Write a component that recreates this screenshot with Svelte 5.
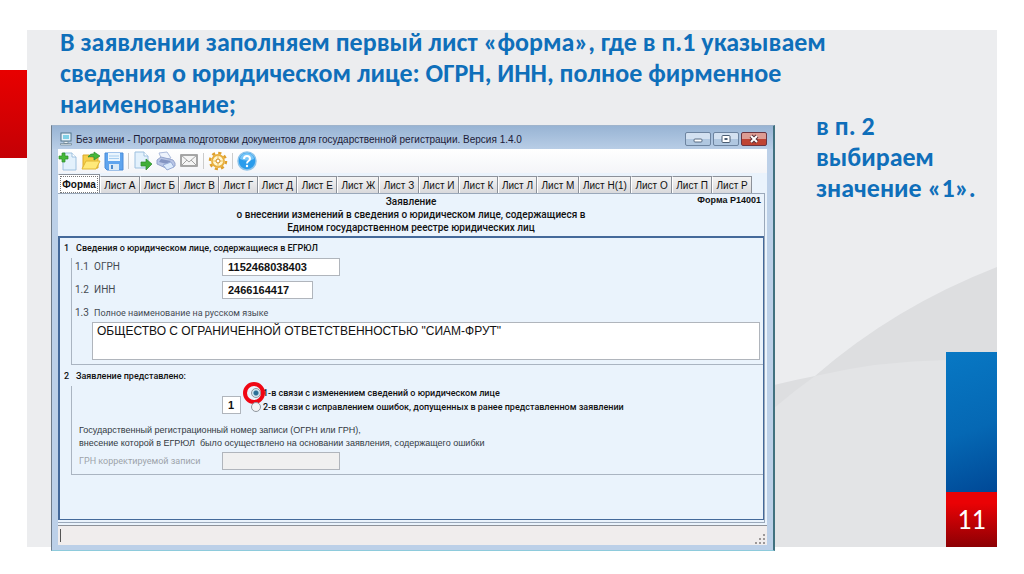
<script lang="ts">
	interface Sheet {
		id: string;
		label: string;
	}

	const sheets: Sheet[] = [
		'Форма',
		'Лист А',
		'Лист Б',
		'Лист В',
		'Лист Г',
		'Лист Д',
		'Лист Е',
		'Лист Ж',
		'Лист З',
		'Лист И',
		'Лист К',
		'Лист Л',
		'Лист М',
		'Лист Н(1)',
		'Лист О',
		'Лист П',
		'Лист Р'
	].map((label, i) => ({ id: `sheet-${i}`, label }));

	let active = $state('sheet-0');
	let reason = $state('1');
	let ogrn = $state('1152468038403');
	let inn = $state('2466164417');
	let fullName = $state('ОБЩЕСТВО С ОГРАНИЧЕННОЙ ОТВЕТСТВЕННОСТЬЮ "СИАМ-ФРУТ"');
</script>

<div class="slide">
	<div class="accent"></div>
	<div class="panel">
		<svg class="waves" viewBox="0 0 223 280" aria-hidden="true">
			<path d="M0 118Q20 113 41 109Q120 40 223 0V280H0Z" fill="#dddee0" />
			<path d="M0 141Q20 124 41 109Q105 94 172 93L223 91V280H0Z" fill="#e3e4e6" />
		</svg>

		<main class="main">
			<h1 class="lead">
				В заявлении заполняем первый лист «форма», где в п.1 указываем<br />
				сведения о юридическом лице: ОГРН, ИНН, полное фирменное<br />
				наименование;
			</h1>

			<section class="window">
				<header class="titlebar">
					<svg class="app-icon" viewBox="0 0 14 14" aria-hidden="true">
						<rect x="2" y="1" width="10" height="8" fill="#e8f4fb" stroke="#50758c" />
						<rect x="4" y="3" width="6" height="4" fill="#7fd0e6" />
						<path d="M5 9.500h4v2H5zM1.500 11.500h11v1.500h-11z" fill="#e6edf2" stroke="#6c8494" stroke-width=".7" />
					</svg>
					<span class="caption">Без имени - Программа подготовки документов для государственной регистрации. Версия 1.4.0</span>
					<div class="controls">
						<button class="control" aria-label="Свернуть">
							<svg viewBox="0 0 12 10"><rect x="2" y="5" width="8" height="3" rx="1" fill="#fff" stroke="#576b82" /></svg>
						</button>
						<button class="control" aria-label="Развернуть">
							<svg viewBox="0 0 12 10"><rect x="2" y="1.500" width="8" height="7" rx="1" fill="#fff" stroke="#4b5d72" /><rect x="4.500" y="4" width="3" height="2" fill="#4b5d72" /></svg>
						</button>
						<button class="control close" aria-label="Закрыть">
							<svg viewBox="0 0 12 10"><path d="M3 2l6 6M9 2L3 8" stroke="#5b3038" stroke-width="4" /><path d="M3 2l6 6M9 2L3 8" stroke="#fff" stroke-width="2" /></svg>
						</button>
					</div>
				</header>

				<div class="client">
					<div class="toolbar">
						<button class="tool" aria-label="Создать">
							<svg viewBox="0 0 20 20">
								<path d="M5 2h9l4 4v13H5z" fill="#e3f1fc" stroke="#9dc0df" />
								<path d="M14 2v4h4" fill="#fff" stroke="#9dc0df" />
								<path d="M4 2h3v3h3v3H7v3H4V8H1V5h3z" fill="#45b83a" stroke="#2c8c29" stroke-width=".7" />
							</svg>
						</button>
						<button class="tool" aria-label="Открыть">
							<svg viewBox="0 0 20 20">
								<path d="M2 4h6l1 2h8v11H2z" fill="#f6cf4a" stroke="#dba92a" />
								<path d="M1 18l4-8h14l-4 8z" fill="#ffe97a" stroke="#e2b634" />
								<path d="M7 6q2-4 6-3V1l6 4-6 4V6q-3-1-6 0z" fill="#45b83a" stroke="#2b8a2c" stroke-width=".7" />
							</svg>
						</button>
						<button class="tool" aria-label="Сохранить">
							<svg viewBox="0 0 20 20">
								<path d="M1 2h18v17H3l-2-2z" fill="#5fa4ee" stroke="#4a8bd8" />
								<path d="M4 2h12v8H4z" fill="#eaf5fe" />
								<path d="M5 5h10M5 7.500h10" stroke="#a6cdf0" />
								<path d="M5 13h10v6H5z" fill="#d8e8f6" />
								<path d="M7 14h2v4H7z" fill="#4a88cc" />
							</svg>
						</button>
						<span class="divider"></span>
						<button class="tool" aria-label="Экспорт">
							<svg viewBox="0 0 20 20">
								<path d="M2 1h9l4 4v12H2z" fill="#e3f1fc" stroke="#9dc0df" />
								<path d="M11 1v4h4" fill="#fff" stroke="#9dc0df" />
								<path d="M8 11h5V8l6 5-6 6v-4H8z" fill="#3fae37" stroke="#2b8a2c" stroke-width=".7" />
							</svg>
						</button>
						<button class="tool" aria-label="Печать">
							<svg viewBox="0 0 20 20">
								<path d="M3 2l8-1 4 6-9 2z" fill="#eef3fc" stroke="#adbcdc" />
								<path d="M1 9l4-3 12 3 2 3v3l-7 3L1 13z" fill="#b9c6e6" stroke="#94a4cc" />
								<path d="M5 8l10 2-4 3-8-2z" fill="#8495c2" />
								<path d="M7 14l8-3 3 5-7 3z" fill="#dcebfc" stroke="#96abd6" />
							</svg>
						</button>
						<button class="tool" aria-label="Отправить">
							<svg viewBox="0 0 20 20">
								<path d="M2 4h16v11H2z" fill="#f5f5f5" stroke="#8b8b8b" stroke-width="1.500" />
								<path d="M2 4l8 7 8-7M2 15l6-6M18 15l-6-6" fill="none" stroke="#a2a2a2" />
							</svg>
						</button>
						<span class="divider"></span>
						<button class="tool" aria-label="Настройки">
							<svg viewBox="0 0 20 20">
								<circle cx="10" cy="10" r="8" fill="none" stroke="#dea02e" stroke-width="2.500" stroke-dasharray="3.140 3.140" />
								<circle cx="10" cy="10" r="6" fill="#fff6cf" stroke="#e8ae3c" stroke-width="1.800" />
								<path d="M10 4v12M4 10h12" stroke="#efc15c" />
								<circle cx="10" cy="10" r="2" fill="#fff" stroke="#d08a1c" />
							</svg>
						</button>
						<span class="divider"></span>
						<button class="tool" aria-label="Справка">
							<svg viewBox="0 0 20 20">
								<circle cx="10" cy="10" r="9" fill="#2a9cec" stroke="#8cc3ea" stroke-width="1.500" />
								<path d="M3 8a7 6 0 0 1 14 0q-7 3-14 0z" fill="#78c6f8" />
								<path d="M7 8q0-3 3-3t3 3q0 1-1.500 2T10 12.500" fill="none" stroke="#fff" stroke-width="2" />
								<circle cx="10" cy="15" r="1.200" fill="#fff" />
							</svg>
						</button>
					</div>

					<div class="tabs" role="tablist">
						{#each sheets as sheet (sheet.id)}
							<button
								class="tab"
								class:active={active === sheet.id}
								role="tab"
								aria-selected={active === sheet.id}
								onclick={() => (active = sheet.id)}
							>
								<span class="tab-label">{sheet.label}</span>
							</button>
						{/each}
					</div>

					<div class="sheet">
						<div class="sheet-head">
							<h2 class="sheet-title">
								Заявление<br />
								о внесении изменений в сведения о юридическом лице, содержащиеся в<br />
								Едином государственном реестре юридических лиц
							</h2>
							<span class="form-code">Форма Р14001</span>
						</div>

						<form class="form">
							<section class="group">
								<h3 class="group-title"><span class="group-no">1</span>Сведения о юридическом лице, содержащиеся в ЕГРЮЛ</h3>
								<div class="group-body">
									<div class="row">
										<span>1.1</span>
										<label for="ogrn">ОГРН</label>
										<input id="ogrn" class="field" bind:value={ogrn} />
									</div>
									<div class="row">
										<span>1.2</span>
										<label for="inn">ИНН</label>
										<input id="inn" class="field short" bind:value={inn} />
									</div>
									<div class="row wide">
										<span>1.3</span>
										<label for="full-name">Полное наименование на русском языке</label>
									</div>
									<textarea id="full-name" class="field name" bind:value={fullName}></textarea>
								</div>
							</section>

							<section class="group second">
								<h3 class="group-title"><span class="group-no">2</span>Заявление представлено:</h3>
								<div class="group-body">
									<div class="choice">
										<input class="field code" aria-label="Код" bind:value={reason} />
										<div class="options">
											<label class="option marked">
												<input type="radio" name="reason" value="1" bind:group={reason} />1-в связи с изменением сведений о юридическом лице
											</label>
											<label class="option">
												<input type="radio" name="reason" value="2" bind:group={reason} />2-в связи с исправлением ошибок, допущенных в ранее представленном заявлении
											</label>
										</div>
									</div>
									<p class="hint">
										Государственный регистрационный номер записи (ОГРН или ГРН),<br />
										внесение которой в ЕГРЮЛ &nbsp;было осуществлено на основании заявления, содержащего ошибки
									</p>
									<div class="grn">
										<label for="grn">ГРН корректируемой записи</label>
										<input id="grn" class="field" disabled />
									</div>
								</div>
							</section>
						</form>
					</div>

					<footer class="status">
						<span class="caret"></span>
						<svg class="grip" viewBox="0 0 10 10" aria-hidden="true">
							<path d="M8 0h2v2H8zM4 4h2v2H4zM8 4h2v2H8zM0 8h2v2H0zM4 8h2v2H4zM8 8h2v2H8z" fill="#9c9898" />
						</svg>
					</footer>
				</div>
			</section>
		</main>

		<aside class="side">
			<p class="note">в п. 2<br />выбираем<br />значение «1».</p>
			<div class="ribbon">
				<div class="ribbon-blue"></div>
				<div class="page-no">11</div>
			</div>
		</aside>
	</div>
</div>

<style>
	:global(body) {
		background: #fff;
	}

	.slide {
		position: relative;
		box-sizing: border-box;
		display: flex;
		min-height: 100vh;
		padding: 27px;
		font-family: 'Roboto', 'Liberation Sans', sans-serif;
		font-size: 9px;
		color: #111;
	}

	.accent {
		position: absolute;
		left: 0;
		top: 70px;
		width: 27px;
		height: 88px;
		background: linear-gradient(#e80000, #c40005);
	}

	.panel {
		position: relative;
		flex: 1;
		display: grid;
		grid-template-columns: 1fr 181px;
		background: linear-gradient(#fff 3px, #ecedef 3px);
	}

	.waves {
		position: absolute;
		right: 0;
		bottom: 0;
		width: 223px;
		height: 280px;
	}

	.main {
		position: relative;
		display: flex;
		flex-direction: column;
		min-width: 0;
	}

	.lead,
	.note {
		margin: 0;
		font-family: 'Carlito', 'Open Sans', sans-serif;
		font-size: 26px;
		font-weight: bold;
		line-height: 31px;
		color: #0f6fba;
	}

	.lead {
		padding-left: 33px;
		white-space: nowrap;
	}

	.window {
		flex: 1;
		display: flex;
		flex-direction: column;
		margin: 5px 41px -4px 24px;
		padding: 0 6px 5px;
		background: #bcd0e8;
		border: 1px solid #6f7c8a;
		border-top-color: #9fb4cc;
		border-right: 2px solid #41717f;
		border-bottom-color: #8ecbdc;
	}

	.titlebar {
		display: flex;
		align-items: center;
		gap: 3px;
		height: 20px;
		margin: 0 -6px;
		padding: 3px 6px 0 7px;
		background: linear-gradient(#98b4d4, #b8cde6);
	}

	.app-icon {
		width: 14px;
		height: 14px;
	}

	.caption {
		flex: 1;
		font-family: 'Liberation Sans', sans-serif;
		font-size: 10px;
		color: #1b1b38;
		white-space: nowrap;
	}

	.controls {
		display: flex;
		gap: 2px;
	}

	button {
		margin: 0;
		padding: 0;
		font: inherit;
		color: inherit;
	}

	.control {
		display: flex;
		align-items: center;
		justify-content: center;
		width: 26px;
		height: 14px;
		background: linear-gradient(#d3e1f1 50%, #b0c7e0 50%);
		border: 1px solid #6d84a0;
		border-radius: 2px;
	}

	.control svg {
		width: 12px;
		height: 10px;
	}

	.close {
		background: linear-gradient(#dd9c93 50%, #bf4433 50%);
		border-color: #6b3541;
	}

	.client {
		flex: 1;
		display: flex;
		flex-direction: column;
		background: #eaf3fc;
	}

	.toolbar {
		display: flex;
		align-items: center;
		gap: 3px;
		height: 24px;
		background: linear-gradient(#fff, #f4f5f8);
	}

	.tool {
		display: flex;
		width: 20px;
		height: 20px;
		background: none;
		border: none;
	}

	.tool svg {
		width: 20px;
		height: 20px;
	}

	.divider {
		width: 1px;
		height: 16px;
		margin: 0 1px;
		background: #ccc;
	}

	.tabs {
		display: flex;
		align-items: flex-end;
		height: 20px;
		margin-right: 15px;
	}

	.tab {
		flex: 1 0 auto;
		height: 17px;
		padding: 0 3px;
		background: linear-gradient(#f4f4f4, #d9d9dc);
		border: 1px solid #8c9199;
		border-left-color: #fff;
		border-bottom: none;
		font-family: 'Liberation Sans', sans-serif;
		font-size: 10px;
		white-space: nowrap;
	}

	.tab.active {
		height: 19px;
		min-width: 42px;
		padding: 0 1px;
		background: #fff;
		font-weight: bold;
	}

	.tab-label {
		display: block;
		line-height: 15px;
	}

	.active .tab-label {
		border: 1px dotted #777;
	}

	.sheet {
		flex: 1;
		display: flex;
		flex-direction: column;
		margin-right: 2px;
		border: 1px solid #9aa8ba;
		border-left: none;
	}

	.sheet-head {
		display: grid;
		grid-template-columns: 68px 1fr 68px;
		height: 42px;
	}

	.sheet-title {
		grid-column: 2;
		margin: 0;
		padding-top: 1px;
		font-size: 10px;
		font-weight: 500;
		line-height: 13px;
		text-align: center;
	}

	.form-code {
		justify-self: end;
		font-family: 'Liberation Sans', sans-serif;
		font-weight: bold;
		line-height: 13px;
		white-space: nowrap;
		padding-right: 3px;
	}

	.form {
		flex: 1;
		margin-bottom: 2px;
		border: 2px solid #44699a;
		border-width: 2px 1px 1px 2px;
	}

	.group-title {
		margin: 0;
		padding-left: 4px;
		font-size: 9px;
		font-weight: 500;
		line-height: 20px;
	}

	.group-no {
		display: inline-block;
		width: 12px;
	}

	.group-body {
		display: flex;
		flex-direction: column;
		margin-left: 11px;
		padding: 0 3px 4px;
		border: 1px solid #aab4c1;
		border-width: 0 0 1px 1px;
	}

	.second {
		padding-top: 1px;
	}

	.row {
		display: grid;
		grid-template-columns: 19px 128px auto;
		justify-content: start;
		height: 18px;
		margin-bottom: 5px;
		font-size: 10px;
		line-height: 18px;
		color: #444a52;
	}

	.row.wide {
		grid-template-columns: 19px auto;
		margin-bottom: 0;
	}

	.row.wide label {
		font-size: 9px;
	}

	.field {
		box-sizing: border-box;
		width: 118px;
		height: 18px;
		margin: 0;
		padding: 0 5px;
		background: #fff;
		border: 1px solid #b0b5bc;
		border-radius: 0;
		font-family: 'Liberation Sans', sans-serif;
		font-size: 11px;
		font-weight: bold;
		color: #111;
	}

	.field:disabled {
		background: #f0f0f0;
	}

	.field.short {
		width: 91px;
	}

	.field.name {
		width: auto;
		height: 38px;
		margin-left: 17px;
		padding: 1px 4px;
		font-size: 12px;
		font-weight: normal;
		line-height: 14px;
		resize: none;
	}

	.choice {
		display: flex;
		align-items: flex-end;
		gap: 10px;
		padding-left: 147px;
	}

	.field.code {
		width: 19px;
	}

	.options {
		display: flex;
		flex-direction: column;
	}

	.option {
		position: relative;
		display: flex;
		align-items: center;
		gap: 2px;
		font-weight: 500;
		line-height: 14px;
		white-space: nowrap;
	}

	.option input {
		appearance: none;
		box-sizing: border-box;
		width: 10px;
		height: 10px;
		margin: 0;
		background: #f4f4f4;
		border: 1px solid #8f969e;
		border-radius: 50%;
	}

	.option input:checked {
		background: radial-gradient(circle, #2b6f96 0 35%, #d5e8f2 55%);
	}

	/* red ring that calls out the chosen option */
	.marked::before {
		content: '';
		position: absolute;
		left: -8px;
		top: -4px;
		box-sizing: border-box;
		width: 22px;
		height: 22px;
		border: 4px solid #f00613;
		border-radius: 50%;
	}

	.hint {
		margin: 10px 0 2px;
		padding-left: 4px;
		font-family: 'Liberation Sans', sans-serif;
		line-height: 13px;
		color: #333a42;
	}

	.grn {
		display: grid;
		grid-template-columns: 143px auto;
		justify-content: start;
		padding-left: 4px;
		line-height: 18px;
		color: #9da3aa;
	}

	.status {
		display: flex;
		align-items: flex-end;
		justify-content: space-between;
		height: 18px;
		margin-top: 2px;
		padding: 0 2px 1px;
		background: #f0eded;
		border-top: 1px solid #8e9299;
	}

	.caret {
		width: 1px;
		height: 13px;
		margin-bottom: 2px;
		background: #555;
	}

	.grip {
		width: 10px;
		height: 10px;
	}

	.side {
		position: relative;
		display: flex;
		flex-direction: column;
		justify-content: space-between;
	}

	.note {
		padding-top: 84px;
	}

	.ribbon {
		align-self: flex-end;
		width: 51px;
	}

	.ribbon-blue {
		height: 140px;
		background: linear-gradient(160deg, #0878c4, #0568b4 55%, #004896);
	}

	.page-no {
		height: 55px;
		background: linear-gradient(#ea0205 20%, #8c0004);
		font-family: 'Carlito', 'Open Sans', sans-serif;
		font-size: 28px;
		line-height: 55px;
		text-align: center;
		color: #fff;
	}
</style>
